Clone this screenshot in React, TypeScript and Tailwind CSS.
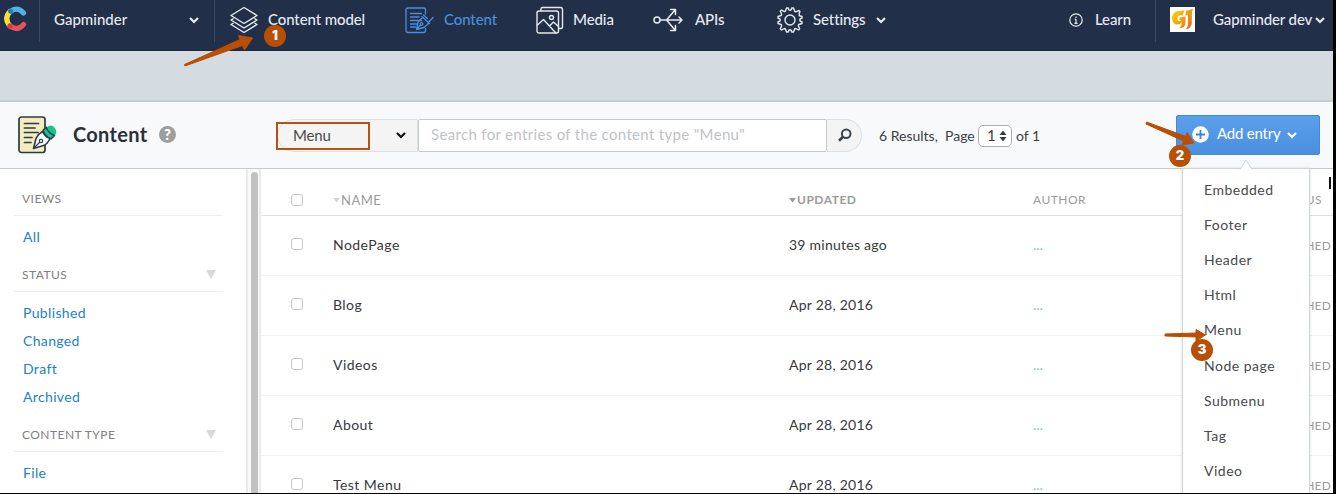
import React from "react";

function Chevron({ className = "" }: { className?: string }) {
  return (
    <svg viewBox="0 0 10 8" className={`h-2 w-2.5 shrink-0 ${className}`} fill="none" stroke="currentColor" strokeWidth="2.2">
      <path d="M1 2l4 4 4-4" />
    </svg>
  );
}

function Logo() {
  return (
    <svg viewBox="0 0 26 28" className="h-7 w-[26px]" fill="none" strokeLinecap="round" strokeWidth="5.2">
      <path d="M8 6.500Q1.500 13.500 8 21" stroke="#f4e13b" />
      <path d="M9 6Q16 1.500 21.500 8" stroke="#4fb3e3" />
      <path d="M8 21Q16 26.500 21.500 19.500" stroke="#e9525b" />
      <circle cx="8.600" cy="6.300" r="2.500" fill="#2a7cb0" stroke="none" />
      <circle cx="8" cy="21" r="2.500" fill="#c8453f" stroke="none" />
    </svg>
  );
}

function LayersIcon() {
  return (
    <svg viewBox="0 0 28 28" className="h-7 w-7" fill="none" stroke="currentColor" strokeWidth="1.400" strokeLinejoin="round" strokeLinecap="round">
      <path d="M14 1.500L27 9.500 14 17.500 1 9.500z" />
      <path d="M3 12.800L1 14l13 8 13-8-2-1.200" />
      <path d="M3 17.300L1 18.500l13 8 13-8-2-1.200" />
    </svg>
  );
}

function PenDocIcon() {
  return (
    <svg viewBox="0 0 29 28" className="h-7 w-[29px]" fill="none" stroke="currentColor" strokeWidth="1.300" strokeLinejoin="round" strokeLinecap="round">
      <path d="M20.500 8V4Q20.500 2 18.500 2H3Q1 2 1 4V24.500Q1 26.500 3 26.500H18.500Q20.500 26.500 20.500 24.500V22.500" />
      <path d="M5.500 7.500h11M5.500 11h8.500M5.500 14.500h11M5.500 18h6M5.500 21h5" />
      <path d="M17 10.500L24.500 17.500M18.500 9L22.500 12.500M23 17L28 11.500M17 12L13 16 11.500 23.500 19 21.500 23.500 17.500M11.500 23.500L15.500 19" />
      <circle cx="16.500" cy="18" r="1.300" />
    </svg>
  );
}

function MediaIcon() {
  return (
    <svg viewBox="0 0 28 28" className="h-7 w-7" fill="none" stroke="currentColor" strokeWidth="1.400" strokeLinejoin="round" strokeLinecap="round">
      <rect x="1" y="5" width="21.500" height="22" rx="2" />
      <path d="M5 4.800V3Q5 1.500 6.500 1.500H24.500Q26.500 1.500 26.500 3.500V21Q26.500 22.500 25 22.500H23" />
      <circle cx="15.500" cy="11.500" r="2" />
      <path d="M1.500 19L7.500 13.500 17.500 24.500 19.500 26.500M13.500 20L17.500 16 22.500 20.500" />
    </svg>
  );
}

function ApiIcon() {
  return (
    <svg viewBox="0 0 30 28" className="h-7 w-[30px]" fill="none" stroke="currentColor" strokeWidth="1.500" strokeLinejoin="round" strokeLinecap="round">
      <circle cx="4" cy="14" r="3" />
      <path d="M7 14H29M26 11l3 3-3 3M13.500 14L22 4M17.500 3.500H22.500V8.500M13.500 14L22 24M22.500 19.500V24.500H17.500" />
    </svg>
  );
}

function GearIcon() {
  return (
    <svg viewBox="0 0 28 28" className="h-7 w-7" fill="none" stroke="currentColor" strokeWidth="1.400" strokeLinejoin="round">
      <circle cx="14" cy="14" r="5" />
      <path
        transform="translate(14 14)"
        d="M-3.500-12H-1.700Q-1.500-9.800 0-9.800T1.700-12H3.500L4.700-8.700 5.700-8.200 8.900-9.500 10-8.200Q8.600-6.600 9.300-5.800L9.300-4.200 12-3.500V-1.700Q9.800-1.500 9.800 0T12 1.700V3.500L8.800 4.500 8.300 5.700 9.700 8.800 8.500 10 5.700 8.500 4.600 8.900 3.500 12H1.700Q1.500 9.800 0 9.800T-1.700 12H-3.500L-4.600 8.900-5.700 8.500-8.500 10-9.700 8.800-8.300 5.700-8.800 4.500-12 3.500V1.700Q-9.800 1.500-9.800 0T-12-1.700V-3.500L-8.800-4.500-8.300-5.700-9.700-8.800-8.500-10-5.700-8.300-4.700-8.700z"
      />
    </svg>
  );
}

function GapminderMark() {
  return (
    <svg viewBox="0 0 25 25" className="h-[25px] w-[25px] bg-white">
      <defs>
        <linearGradient id="flame" x1="0" y1="0" x2="25" y2="22" gradientUnits="userSpaceOnUse">
          <stop offset="0.100" stopColor="#fddc00" />
          <stop offset="0.900" stopColor="#ee651c" />
        </linearGradient>
      </defs>
      <g fill="url(#flame)">
        <path d="M14.500 3Q12 4.500 8 4 2 5 2 11.500 2.500 17.500 7.500 17.500 10 17.300 11.500 15.500 12 19.500 8.500 21.500 15.500 21.500 15.500 14.500V9.500L9.500 10.500V13L11 13Q10 14.500 8.800 14.200 6.800 13.500 7.300 10.500 8 7.500 12.500 8.500z" />
        <path d="M16 3.500Q19 4 23 1.500 21.800 4 21.800 9V16Q21.500 21.500 15.500 22.500 18.300 19.500 18 15V8Q16.500 8 15.500 8.700z" />
      </g>
    </svg>
  );
}

function ContentDocIcon() {
  return (
    <svg viewBox="0 0 40 38" className="h-[38px] w-10" stroke="#2b3a4e" strokeLinejoin="round" strokeLinecap="round">
      <rect x="1" y="1" width="26" height="35.500" rx="2.500" fill="#f3edbb" strokeWidth="1.700" />
      <path d="M6.500 7.500H20.500M6.500 12H17M6.500 16.500H20M6.500 21.500H14M6.500 26.500H13" fill="none" strokeWidth="1.700" />
      <path d="M28.500 11.500Q32 8 35.500 10.500 39.500 14.500 37.500 18.500L34.500 20Q30 17 28.500 11.500z" fill="#15c489" stroke="none" />
      <path d="M25 14.500L28 11Q30.500 17.500 36.500 19.500L33 23Q27 20.500 25 14.500z" fill="#15c489" strokeWidth="1.500" />
      <path d="M24.500 15.500Q27 21 32 22.500 29.500 28 25.500 29.500L15.500 32.500 18 22.500Q20 18 24.500 15.500z" fill="#fff" strokeWidth="1.600" />
      <path d="M16 32L22 26" fill="none" strokeWidth="1.200" />
      <circle cx="23" cy="25" r="1.700" fill="#fff" strokeWidth="1.200" />
    </svg>
  );
}

function Checkbox() {
  return <span className="block h-3 w-3 rounded-[3px] border border-[#c6c6c6] bg-white" />;
}

function NavItem({ icon, label, className }: { icon: React.ReactNode; label: string; className: string }) {
  return (
    <div className={`flex shrink-0 items-center ${className}`}>
      {icon}
      <span>{label}</span>
    </div>
  );
}

function TopBar() {
  return (
    <header className="h-[51px] shrink-0 border-b border-[#1b2840] bg-[#212f49] text-[15px] font-medium tracking-[-0.100px] text-[#e5eaf1]">
      <div className="flex h-[42px] whitespace-nowrap">
        <div className="flex w-10 items-start border-r border-[#3b4962] pt-[5px] pl-[2px]"><Logo /></div>
        <div className="flex h-[39px] w-[174px] items-center justify-between pr-[15px] pl-3.5">
          <span className="tracking-normal">Gapminder</span>
          <Chevron />
        </div>
        <div className="h-full w-px bg-[#3b4962]" />
        <nav className="flex h-[39px] w-[855px] pl-[15px]">
          <NavItem icon={<LayersIcon />} label="Content model" className="w-[175px] gap-[10px]" />
          <NavItem icon={<PenDocIcon />} label="Content" className="w-[131px] gap-[10px] text-[#4a8fdd]" />
          <NavItem icon={<MediaIcon />} label="Media" className="w-[117px] gap-[9px]" />
          <NavItem icon={<ApiIcon />} label="APIs" className="w-[123px] gap-3" />
          <NavItem icon={<GearIcon />} label="Settings" className="w-[100px] gap-[9px]" />
          <Chevron className="mt-4" />
          <div className="ml-[183px] flex items-center gap-3">
            <svg viewBox="0 0 14 14" className="h-3.5 w-3.5" fill="none" stroke="currentColor" strokeWidth="1.200">
              <circle cx="7" cy="7" r="6.200" />
              <path d="M7 3.500v1.400M7 6v4.500M5.800 6.300H7M5.500 10.300h3" />
            </svg>
            <span>Learn</span>
          </div>
        </nav>
        <div className="ml-[85px] h-full w-px bg-[#3b4962]" />
        <div className="flex h-[39px] items-center pl-3.5">
          <GapminderMark />
          <span className="ml-[18px] w-[101px]">Gapminder dev</span>
          <Chevron className="ml-px" />
        </div>
      </div>
    </header>
  );
}

function Toolbar() {
  return (
    <div className="flex h-[67px] shrink-0 items-center border-b border-[#c3ced3] bg-[#f7f9fa] whitespace-nowrap">
      <div className="flex w-[277px] items-center pl-[18px]">
        <ContentDocIcon />
        <h1 className="mb-0.5 ml-[15px] w-[74px] text-[20px] font-bold tracking-[0.300px] text-[#2a3039]">Content</h1>
        <span className="mb-0.5 ml-3 flex h-[17px] w-[17px] items-center justify-center rounded-full bg-[#9e9e9e] text-[15px] font-black text-white">?</span>
      </div>
      <div className="flex h-[33px] w-[586px]">
        <div className="relative flex w-[141px] items-center justify-between rounded-l-full border border-[#dedfdf] bg-[#f4f4f4] pr-[11px] pl-[15px] text-[15px] tracking-[-0.200px] text-[#4b4b4b]">
          <span>Menu</span>
          <Chevron className="text-[#111]" />
          <div className="absolute top-[2px] -left-[2px] h-[28px] w-[94px] border-2 border-[#b35413]" />
        </div>
        <div className="flex w-[409px] items-center rounded-xs border border-[#c5cacc] bg-white pb-0.5 pl-3 text-[15px] tracking-[0.040px] text-[#bfc3c6]">
          <span className="tracking-[0.330px]">Search for entries of the content type "Menu"</span>
        </div>
        <div className="flex w-[35px] items-center rounded-r-full border border-l-0 border-[#dedfdf] bg-[#f4f4f4] pl-[11px]">
          <svg viewBox="0 0 14 14" className="h-3.5 w-3.5" fill="none" stroke="#3c434c" strokeWidth="2">
            <circle cx="8.200" cy="5.700" r="4.300" />
            <path d="M5 8.800L1 12.700" strokeWidth="2.600" />
          </svg>
        </div>
      </div>
      <div className="flex w-[313px] items-center pt-px pl-4 text-[14px] text-[#3a3e44]">
        <span className="w-[96px]">6 Results,&nbsp; Page</span>
        <span className="ml-[3px] flex h-[22px] w-[34px] items-center justify-between rounded-[5px] border border-[#aaadb0] bg-white pr-1 pl-2 text-[15px]">
          1
          <svg viewBox="0 0 8 12" className="h-3 w-2" fill="#3a3e44"><path d="M.5 5L4 .5 7.500 5zM.5 7L4 11.500 7.500 7z" /></svg>
        </span>
        <span className="ml-1">of 1</span>
      </div>
      <button className="mb-px flex h-10 w-[144px] items-center rounded-xs border border-[#4489d8] bg-linear-to-b from-[#5b9fed] to-[#4a90df] pl-[15px] text-[15px] text-white">
        <svg viewBox="0 0 17 17" className="h-[17px] w-[17px]"><circle cx="8.500" cy="8.500" r="8.300" fill="#fff" /><path d="M8.500 4v9M4 8.500h9" stroke="#3c83d5" strokeWidth="1.800" /></svg>
        <span className="mb-0.5 ml-2 w-[64px] text-left tracking-[-0.200px]">Add entry</span>
        <Chevron className="ml-[6px]" />
      </button>
    </div>
  );
}

function SideHeading({ label, arrow = false }: { label: string; arrow?: boolean }) {
  return (
    <div className="ml-3.5 flex h-[34px] w-[209px] items-center justify-between border-b border-[#eeeeee] pr-[7px] pl-2 text-[12px] tracking-[0.450px] text-[#808080]">
      {label}
      {arrow && <svg viewBox="0 0 10 9" className="h-[9px] w-2.5" fill="#dadada"><path d="M0 0h10L5 9z" /></svg>}
    </div>
  );
}

function Sidebar() {
  return (
    <aside className="w-[246px] shrink-0 pt-[13px] text-[14px] tracking-[0.350px] text-[#2380cb]">
      <SideHeading label="VIEWS" />
      <div className="flex h-[42px] items-center pb-px pl-[23px]">All</div>
      <SideHeading label="STATUS" arrow />
      <ul className="h-[126px] pt-1.5 pl-[23px]">
        {["Published", "Changed", "Draft", "Archived"].map((s) => (
          <li key={s} className="flex h-7 items-center">{s}</li>
        ))}
      </ul>
      <SideHeading label="CONTENT TYPE" arrow />
      <div className="flex h-[42px] items-center pb-px pl-[23px]">File</div>
    </aside>
  );
}

function SortMark({ color }: { color: string }) {
  return <svg viewBox="0 0 7 5" className="mr-px h-[5px] w-[7px]" fill={color}><path d="M0 0h7L3.500 4.500z" /></svg>;
}

const entries = [
  ["NodePage", "39 minutes ago"],
  ["Blog", "Apr 28, 2016"],
  ["Videos", "Apr 28, 2016"],
  ["About", "Apr 28, 2016"],
  ["Test Menu", "Apr 28, 2016"],
];

function EntryTable() {
  return (
    <main className="min-w-0 flex-1 whitespace-nowrap">
      <div className="grid h-[47px] grid-cols-[72px_456px_244px_224px_1fr] items-center border-b border-[#dfe1e2] pt-[15px] text-[12px] tracking-[0.500px] text-[#9b9b9b]">
        <div className="pl-[30px]"><Checkbox /></div>
        <div className="flex items-center pt-0.5 text-[13px]"><SortMark color="#d4d4d4" />NAME</div>
        <div className="flex items-center pt-px font-bold"><SortMark color="#9b9b9b" />UPDATED</div>
        <div className="pt-px">AUTHOR</div>
        <div className="pr-[11px] pt-px text-right">STATUS</div>
      </div>
      {entries.map(([name, date]) => (
        <div key={name} className="grid h-[60px] grid-cols-[72px_456px_244px_224px_1fr] items-center border-b border-[#f1f1f1] pb-[3px] text-[14px] text-[#37393c]">
          <div className="pl-[30px]"><Checkbox /></div>
          <div className="tracking-[0.450px]">{name}</div>
          <div className="tracking-[0.250px]">{date}</div>
          <div className="text-[#75c5bd]">...</div>
          <div className="pt-1 pr-[2px] text-right text-[12px] tracking-[0.200px] text-[#9b9b9b]">PUBLISHED</div>
        </div>
      ))}
    </main>
  );
}

const types = ["Embedded", "Footer", "Header", "Html", "Menu", "Node page", "Submenu", "Tag", "Video"];

function EntryMenu() {
  return (
    <div className="absolute top-[168px] left-[1182px] h-[326px] w-[128px] border-x border-t border-[#ccd5d9] bg-white pt-[3px] shadow-[0_0_3px_rgba(0,0,0,0.12)]">
      <svg viewBox="0 0 14 11" className="absolute -top-[10px] left-[56px] h-[11px] w-3.5">
        <path d="M1 10.500L7 1l6 9.500" fill="#fff" stroke="#ccd5d9" />
        <path d="M1.500 10.500h11" stroke="#fff" />
      </svg>
      <ul>
        {types.map((t) => (
          <li key={t} className="flex h-[35.100px] items-center pl-[21px] text-[14px] tracking-[0.500px] text-[#484a4d]">{t}</li>
        ))}
      </ul>
    </div>
  );
}

function Badge({ n, className }: { n: number; className: string }) {
  return (
    <span className={`absolute flex h-[22px] w-[22px] items-center justify-center rounded-full bg-[#b94f04] font-[Inter,sans-serif] text-[13px] font-black text-white ${className}`}>{n}</span>
  );
}

function Annotations() {
  return (
    <>
      <svg viewBox="0 0 1336 494" className="pointer-events-none absolute top-0 left-0 h-[494px] w-[1336px]" fill="#b94f04" stroke="#b94f04" strokeLinejoin="round">
        <path d="M184.500 64.500L240 39.500 238.500 35.500 252.500 38 244.500 50 242.500 45.500 185 66z" />
        <path d="M1146.500 122L1186 136.500 1187 132.500 1194 143 1182 145 1183.500 141 1146 124z" />
        <path d="M1165 334L1196 333V329.500L1205.500 335 1196 341V337L1165 336z" />
      </svg>
      <Badge n={1} className="top-[25px] left-[264px]" />
      <Badge n={2} className="top-[145px] left-[1169px]" />
      <Badge n={3} className="top-[339px] left-[1191px]" />
    </>
  );
}

export default function App() {
  return (
    <div className="relative h-[494px] w-[1336px] overflow-hidden bg-black font-[Lato,sans-serif]">
      <div className="flex h-[493px] w-[1333px] flex-col overflow-hidden bg-white">
        <TopBar />
        <div className="h-[51px] shrink-0 border-b-2 border-[#c3cdd2] bg-[#d4dbe1]" />
        <Toolbar />
        <div className="flex min-h-0 flex-1">
          <Sidebar />
          <div className="w-[15px] shrink-0 border-x-2 border-[#eaeaea] bg-[#fafafa] pt-[3px] pl-[3px]">
            <div className="h-full w-[7px] rounded-t-full bg-[#c1c1c1]" />
          </div>
          <EntryTable />
        </div>
      </div>
      <EntryMenu />
      <div className="absolute top-[177px] left-[1329px] h-3 w-[2px] bg-[#111]" />
      <div className="absolute bottom-0 left-0 h-px w-full bg-black" />
      <Annotations />
    </div>
  );
}
